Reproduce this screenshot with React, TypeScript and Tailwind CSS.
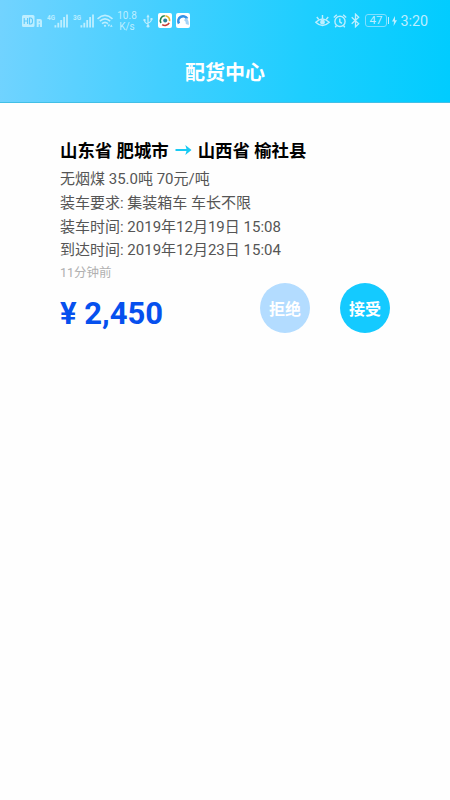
import React from "react";

const Signal = ({ label, className = "" }: { label: string; className?: string }) => (
  <svg className={className} width="22" height="16" viewBox="0 0 22 16" fill="currentColor">
    <text x="0" y="6.8" fontSize="7.8" fontWeight="700" textLength="8" lengthAdjust="spacingAndGlyphs">{label}</text>
    <rect x="7.5" y="12.2" width="1.8" height="2.3" />
    <rect x="10.4" y="9.8" width="1.8" height="4.7" />
    <rect x="13.3" y="7" width="1.8" height="7.5" />
    <rect x="16.2" y="4" width="1.8" height="10.5" />
    <rect x="19.1" y="1.5" width="1.8" height="13" />
  </svg>
);

function StatusBar() {
  return (
    <div className="flex h-[41px] items-center pl-[22px] pr-[22px] text-[#bdeeff]">
      <svg width="20" height="12" viewBox="0 0 20 12" fill="currentColor" className="mt-px">
        <rect x="0" y="0" width="12.5" height="12" rx="1.5" />
        <path d="M2.2 3v6M5.6 3v6M2.2 6h3.4M7.5 3v6h1.2q1.8 0 1.8-3t-1.8-3z" fill="none" stroke="#58c8fb" strokeWidth="1.1" />
        <path d="M14.7 4h3.3a2 2 0 0 1 2 2v6h-5.3z" />
        <path d="M16.7 6.3h1.1v1.5h-1.1zM16.7 9.2h1.1V12h-1.1z" fill="#62ceff" />
      </svg>
      <Signal label="4G" className="ml-[5px]" />
      <Signal label="3G" className="ml-[4px]" />
      <svg className="ml-[2px] mt-px" width="17" height="14" viewBox="0 0 17 14" fill="none" stroke="currentColor" strokeWidth="1.6">
        <path d="M.5 4.8Q8-2 15.5 4.8M2.8 7.2Q8 2.5 13.2 7.2M5 9.6Q8 7 11 9.6" />
        <circle cx="8" cy="11.8" r="1.1" fill="currentColor" stroke="none" />
        <path d="M10.4 10.6h2.8l-1.4 2.2zM13 12.8l1.3-2.2 1.3 2.2z" fill="currentColor" stroke="none" />
      </svg>
      <div className="ml-[3px] mt-px flex w-[20px] flex-col items-center text-[10px] leading-[11px]">
        <span>10.8</span>
        <span>K/s</span>
      </div>
      <svg className="ml-[6px]" width="10" height="14" viewBox="0 0 10 14" fill="none" stroke="currentColor" strokeWidth="1.2">
        <path d="M5 2v10M5 10Q1.5 9 1.5 6M5 9Q8.5 8 8.5 5" />
        <path d="M3.4 3.2 5 .3 6.6 3.2zM.5 5h2v2h-2zM7.5 4h2v2h-2z" fill="currentColor" stroke="none" />
        <circle cx="5" cy="12.2" r="1.4" fill="currentColor" stroke="none" />
      </svg>
      <svg className="ml-[5px]" width="14" height="15" viewBox="0 0 14 15">
        <rect width="14" height="15" rx="2" fill="#fff" />
        <g fill="none" strokeWidth="1.6">
          <path d="M3 10A4.8 4.8 0 0 1 6.8 2.7" stroke="#24864c" />
          <path d="M7.4 2.7a4.8 4.8 0 0 1 4.2 5.5" stroke="#e3b52b" />
          <path d="M11.2 9.8A4.8 4.8 0 0 1 4.2 11.6" stroke="#c83b36" />
        </g>
        <circle cx="7.2" cy="7.5" r="2" fill="#2b7f9b" />
      </svg>
      <svg className="ml-[4px]" width="14" height="15" viewBox="0 0 14 15">
        <rect width="14" height="15" rx="2" fill="#fff" />
        <path d="M3 10.5A4.7 4.7 0 0 1 11.2 5.6" fill="none" stroke="#3592e6" strokeWidth="2.6" />
        <path d="M10.6 5Q13.2 7.5 12.8 12L9.8 11Q10.3 8.5 8 7z" fill="#a5d2f6" />
      </svg>
      <svg className="ml-auto" width="15" height="14" viewBox="0 0 15 14" fill="none" stroke="currentColor" strokeWidth="1.4">
        <path d="M.8 8.2Q7.5 1.6 14.2 8.2Q7.5 14.8.8 8.2zM7.5 4.4V1M3.6 5.3 1.8 3M11.4 5.3l1.8-2.3" />
        <circle cx="7.5" cy="8.2" r="1.7" fill="currentColor" />
      </svg>
      <svg className="ml-[3px]" width="14" height="14" viewBox="0 0 14 14" fill="none" stroke="currentColor" strokeWidth="1.4">
        <circle cx="7" cy="7.4" r="5.1" />
        <path d="M6.8 4.6v3.2l2.1 1.6M.8 3.6 3.8.8M13.2 3.6 10.2.8M3.4 11.7l-1.2 1.5M10.6 11.7l1.2 1.5" />
      </svg>
      <svg className="ml-[4px]" width="9" height="15" viewBox="0 0 9 15" fill="none" stroke="currentColor" strokeWidth="1.3">
        <path d="m.7 4.2 7 6.6L4.5 13.8V1.2l3.2 3L.7 10.8" />
      </svg>
      <div className="ml-[5px] flex h-[13px] w-[22px] items-center justify-center rounded-[3px] border border-[#7fdfff] text-[11.5px] leading-none">47</div>
      <span className="ml-px h-[7px] w-[1.5px] bg-[#bdeeff]" />
      <svg className="ml-[3px]" width="5" height="10" viewBox="0 0 5 10" fill="currentColor">
        <path d="M3 0 0 5.6h2L1.6 10 5 4.2H3z" />
      </svg>
      <span className="ml-[3px] pt-px text-[14.3px] leading-none">3:20</span>
    </div>
  );
}

export default function App() {
  return (
    <div className="min-h-[800px] w-[450px] bg-[#fefefe] font-[Roboto,'Noto_Sans_CJK_SC',sans-serif]">
      <header className="h-[103px] border-b border-[#42bfe6] bg-linear-[95deg,#72d3ff_0%,#43cfff_36%,#1dceff_68%,#00ccff_100%]">
        <StatusBar />
        <h1 className="flex h-[61px] items-center justify-center pt-[3px] text-[20px] leading-none font-bold text-white">配货中心</h1>
      </header>
      <main className="px-[60px] pt-[35px]">
        <h2 className="flex h-[26px] items-center text-[17.4px] leading-[26px] font-bold whitespace-nowrap text-black">
          <span>山东省 肥城市</span>
          <svg className="mx-[6px] mb-[2px] shrink-0" width="17" height="12" viewBox="0 0 17 12" fill="none" stroke="#19caf3" strokeWidth="2">
            <path d="M.5 6H14" />
            <path d="M10.3 1 16.5 6l-6.2 5 1.5-5z" fill="#19caf3" stroke="none" />
          </svg>
          <span>山西省 榆社县</span>
        </h2>
        <div className="mt-[4px] text-[15px] leading-[23.8px] whitespace-nowrap text-[#555]">
          <p>无烟煤 35.0吨 70元/吨</p>
          <p>装车要求: 集装箱车 车长不限</p>
          <p>装车时间: 2019年12月19日 15:08</p>
          <p>到达时间: 2019年12月23日 15:04</p>
        </div>
        <p className="text-[12.5px] leading-[20px] text-[#b0b0b0]">11分钟前</p>
        <div className="mt-[-0.2px] flex h-[50px] items-center">
          <strong className="mt-[12px] w-[200px] text-[31px] leading-[40px] font-bold text-[#0650ee]">¥ 2,450</strong>
          <button className="size-[50px] rounded-full bg-[#b3dcff] pt-[4px] text-[16px] font-bold text-white">拒绝</button>
          <button className="ml-[30px] size-[50px] rounded-full bg-[#14caff] pt-[4px] text-[16px] font-bold text-white">接受</button>
        </div>
      </main>
    </div>
  );
}
